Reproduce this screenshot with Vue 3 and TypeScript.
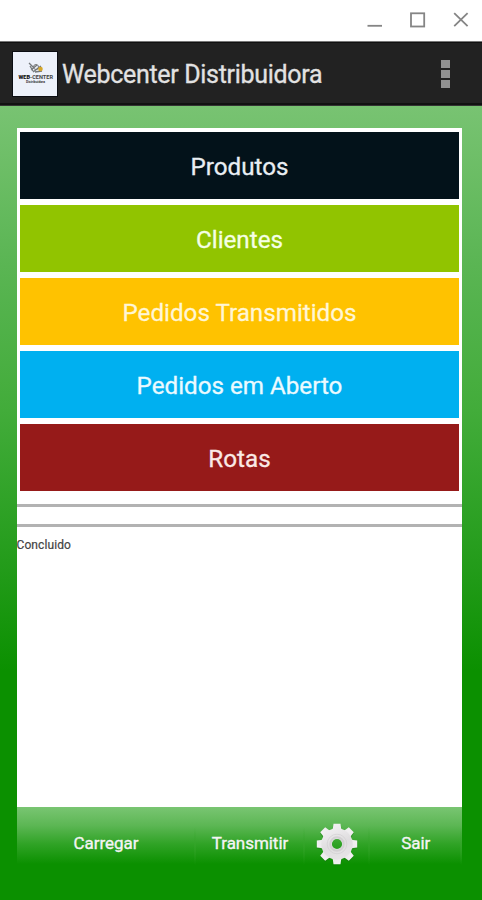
<script setup lang="ts">
interface MenuItem {
  label: string
  tone: string
}

const menu: MenuItem[] = [
  { label: 'Produtos', tone: 'dark' },
  { label: 'Clientes', tone: 'lime' },
  { label: 'Pedidos Transmitidos', tone: 'amber' },
  { label: 'Pedidos em Aberto', tone: 'blue' },
  { label: 'Rotas', tone: 'red' },
]

const teeth: number[] = [0, 45, 90, 135, 180, 225, 270, 315]
</script>

<template>
  <div class="window">
    <div class="titlebar">
      <svg class="controls" width="106" height="20" viewBox="0 0 106 20" fill="none" stroke="#858585" stroke-width="1.8">
        <path d="M0.5 15.8H15" />
        <rect x="44" y="3.3" width="13.2" height="13.2" />
        <path d="M87.2 3.2L100.6 16.2M100.6 3.2L87.2 16.2" />
      </svg>
    </div>

    <header class="appbar">
      <svg class="logo" width="44" height="44" viewBox="0 0 44 44">
        <rect width="44" height="44" fill="#edf1fa" />
        <path d="M16 11L21 16M18 18L24 13M20 20L28 14M17 14L20 19M22 20L29 19" stroke="#73777a" stroke-width="1.3" />
        <circle cx="23" cy="15" r="2.5" fill="none" stroke="#777" />
        <circle cx="27.5" cy="17" r="2.3" fill="#d5a72b" />
        <text x="5.5" y="27.4" class="logo-main" textLength="34.5" lengthAdjust="spacingAndGlyphs"><tspan class="logo-bold">WEB</tspan>-CENTER</text>
        <text x="13" y="31.2" class="logo-sub" textLength="19" lengthAdjust="spacingAndGlyphs">Distribuidora</text>
      </svg>
      <h1>Webcenter Distribuidora</h1>
      <div class="overflow"><i></i><i></i><i></i></div>
    </header>

    <main class="screen">
      <section class="panel">
        <nav class="menu">
          <button v-for="item in menu" :key="item.label" :class="['item', item.tone]">{{ item.label }}</button>
        </nav>
        <div class="progress"></div>
        <p class="status">Concluido</p>
      </section>

      <footer class="actions">
        <button class="action load">Carregar</button>
        <button class="action send">Transmitir</button>
        <button class="action gear" aria-label="Configurações">
          <svg width="42" height="44" viewBox="-21 -21 42 44">
            <defs>
              <linearGradient id="metal" gradientUnits="userSpaceOnUse" x1="-8" y1="-20" x2="8" y2="20">
                <stop offset="0" stop-color="#f5f3f5" />
                <stop offset="0.5" stop-color="#dfdddf" />
                <stop offset="1" stop-color="#e9e7e9" />
              </linearGradient>
            </defs>
            <g fill="#176f12" opacity="0.35" transform="translate(0 1)">
              <path v-for="a in teeth" :key="a" d="M-5.4 -13L-3.6 -20.4H3.6L5.4 -13Z" :transform="`rotate(${a})`" />
            </g>
            <g fill="url(#metal)">
              <path v-for="a in teeth" :key="a" d="M-5.2 -13L-4.1 -16L-3.5 -20.2H3.5L4.1 -16L5.2 -13Z" :transform="`rotate(${a})`" />
            </g>
            <circle r="10.4" fill="none" stroke="url(#metal)" stroke-width="10.6" />
            <circle r="9.8" fill="none" stroke="#cfcdcf" stroke-width="1" opacity="0.6" />
            <circle r="6.7" fill="none" stroke="#d2d0d2" stroke-width="2" />
          </svg>
        </button>
        <button class="action exit">Sair</button>
      </footer>
    </main>
  </div>
</template>

<style>
body {
  margin: 0;
}
</style>

<style scoped>
.window {
  width: 482px;
  height: 900px;
  display: flex;
  flex-direction: column;
  overflow: hidden;
  background: #fff;
  font-family: Roboto, "Liberation Sans", sans-serif;
}
.titlebar {
  box-sizing: border-box;
  height: 41px;
  display: flex;
  justify-content: flex-end;
  padding: 10px 9px 0 0;
}
.appbar {
  box-sizing: border-box;
  height: 65px;
  display: flex;
  align-items: center;
  padding: 0 32px 0 13px;
  background: #222;
  border-top: 1px solid #777;
  border-bottom: 1px solid #333;
  box-shadow: inset 0 1px #111, inset 0 -2px #111;
}
.logo {
  flex: none;
  outline: 1px solid #0b0d12;
}
.logo-main {
  font: bold 6.2px Roboto, sans-serif;
  fill: #444;
}
.logo-bold {
  font-weight: 900;
  fill: #111;
}
.logo-sub {
  font: bold 3.4px Roboto, sans-serif;
  fill: #333;
}
h1 {
  flex: 1;
  margin: 2px 0 0 5px;
  font-size: 25px;
  line-height: 30px;
  font-weight: 400;
  letter-spacing: -0.31px;
  color: #e2e2e2;
  -webkit-text-stroke: 0.3px;
  white-space: nowrap;
}
.overflow {
  display: flex;
  flex-direction: column;
  gap: 2px;
}
.overflow i {
  width: 9px;
  height: 8px;
  background: #929292;
}
.screen {
  flex: 1;
  box-sizing: border-box;
  padding: 22px 20px 0 16.5px;
  background: linear-gradient(#78c372 0, #5ab553 160px, #42ac3a 305px, #229b19 465px, #0b9000 565px);
}
.panel {
  height: 679px;
  background: #fff;
}
.menu {
  height: 359.5px;
  padding: 3.5px 3px 12.5px 3.5px;
  display: flex;
  flex-direction: column;
  gap: 6px;
}
button {
  border: 0;
  margin: 0;
  padding: 0;
  font-family: inherit;
  color: #f4f4f4;
}
.item {
  flex: 1;
  font-size: 24.2px;
  line-height: 30px;
  padding-top: 3px;
  -webkit-text-stroke: 0.3px;
}
.dark { background: #03121a; color: #e9eef3; }
.lime { background: #91c400; color: #f5ffe5; }
.amber { background: #ffc200; color: #fff6d5; }
.blue { background: #00b0f0; color: #ebfaff; }
.red { background: #961a19; color: #fae9e5; }
.progress {
  height: 17px;
  border-top: 3.5px solid #b2b2b2;
  border-bottom: 3.5px solid #b2b2b2;
}
.status {
  margin: 10px 0 0;
  font-size: 12px;
  letter-spacing: 0.1px;
  line-height: 16px;
  color: #444;
  -webkit-text-stroke: 0.2px;
}
.actions {
  height: 64px;
  display: grid;
  grid-template-columns: 179px 109px 65px 92.5px;
  background: linear-gradient(#79c572 0, #5db755 18px, #30a326 37px, #0b9000 57px);
}
.action {
  display: flex;
  justify-content: center;
  align-items: flex-start;
  padding-top: 26px;
  background: linear-gradient(transparent 20px, #36a52b80 38px, transparent 58px) right / 2px 100% no-repeat;
  font-size: 17px;
  letter-spacing: -0.05px;
  line-height: 21px;
  -webkit-text-stroke: 0.35px;
}
.gear {
  padding-top: 16px;
}
</style>
